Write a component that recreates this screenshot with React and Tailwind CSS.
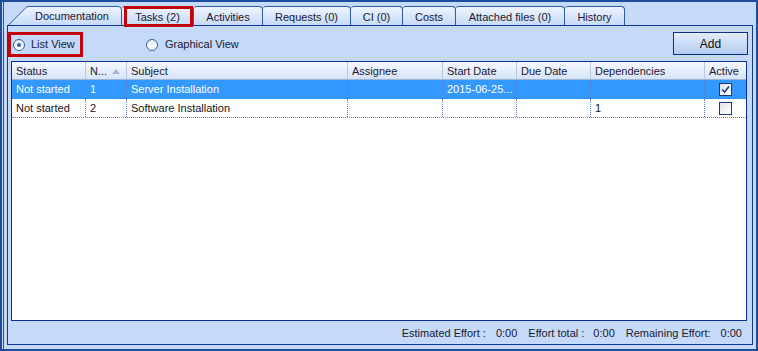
import React from "react";

const tabs = [
  { label: "Tasks (2)", w: "w-[72px]", marked: true },
  { label: "Activities", w: "w-[69px]" },
  { label: "Requests (0)", w: "w-[88px]" },
  { label: "CI (0)", w: "w-[52px]" },
  { label: "Costs", w: "w-[53px]" },
  { label: "Attached files (0)", w: "w-[109px]" },
  { label: "History", w: "w-[60px]" },
];

const columns = [
  { label: "Status" },
  { label: "N...", sort: true },
  { label: "Subject" },
  { label: "Assignee" },
  { label: "Start Date" },
  { label: "Due Date" },
  { label: "Dependencies" },
  { label: "Active" },
];

const rows = [
  { status: "Not started", no: "1", subject: "Server Installation", start: "2015-06-25...", deps: "", active: true, selected: true },
  { status: "Not started", no: "2", subject: "Software Installation", start: "", deps: "1", active: false },
];

const grid = "grid grid-cols-[74px_41px_221px_95px_74px_74px_114px_41px]";

function Radio({ checked }) {
  return (
    <span className="w-[12px] h-[12px] rounded-full border border-[#3d5f95] bg-gradient-to-b from-[#e6ecf4] to-white flex items-center justify-center shrink-0">
      {checked && <span className="w-[4px] h-[4px] rounded-full bg-[#2a64c0]" />}
    </span>
  );
}

function Checkbox({ checked }) {
  return (
    <span className="w-[13px] h-[13px] border border-[#1c3a70] bg-gradient-to-br from-[#dfe3ea] to-white flex items-center justify-center">
      {checked && (
        <svg width="9" height="9" viewBox="0 0 9 9">
          <path d="M1 4.5 L3.5 7 L8 1.5" fill="none" stroke="#1f3f86" strokeWidth="1.6" />
        </svg>
      )}
    </span>
  );
}

export default function App() {
  return (
    <div
      className="w-[758px] h-[351px] border-2 border-[#1f4d9c] bg-[#c4daf8] text-[11px] leading-none text-[#1c1830] overflow-hidden"
      style={{ fontFamily: '"Liberation Sans", Arial, sans-serif' }}
    >
      <div className="h-full ml-[1px] border-l border-[#2a56a6] pl-[3px] pr-[3px] pt-[4px] flex flex-col">
        {/* tab strip */}
        <div className="h-[19px] flex items-end pl-[1px] shrink-0">
          <div className="relative w-[114px] h-[19px] flex items-center justify-center pl-[14px] pt-[2px]">
            <svg className="absolute inset-0" width="114" height="19" viewBox="0 0 114 19">
              <defs>
                <linearGradient id="tabg" x1="0" y1="0" x2="0" y2="1">
                  <stop offset="0" stopColor="#eef4fd" />
                  <stop offset="1" stopColor="#c6dbf7" />
                </linearGradient>
              </defs>
              <path d="M0.5 19 L17 2.5 Q18.5 0.5 21 0.5 L110 0.5 Q113.5 0.5 113.5 4 L113.5 19" fill="url(#tabg)" stroke="#2d5aa5" />
            </svg>
            <span className="relative">Documentation</span>
          </div>
          {tabs.map((t) => (
            <div
              key={t.label}
              className={`relative ${t.w} h-[19px] flex items-center justify-center pt-[2px] border-t border-r border-[#2d5aa5] rounded-tr-[4px] rounded-tl-[3px] bg-gradient-to-b from-[#eef4fd] to-[#c6dbf7]`}
            >
              {t.label}
              {t.marked && (
                <span className="absolute -top-[1px] left-[2px] right-0 -bottom-[2px] border-[3px] border-[#c4000b]" />
              )}
            </div>
          ))}
        </div>

        {/* panel */}
        <div className="h-[320px] border border-[#0d36a0] flex flex-col">
          <div className="h-[23px] mt-[6px] flex items-start pr-[4px] shrink-0">
            <div className="w-[75px] h-[25px] border-[3px] border-[#c4000b] flex items-center pl-[2px] gap-[6px]">
              <Radio checked />
              <span>List View</span>
            </div>
            <div className="ml-[63px] h-[25px] flex items-center gap-[7px]">
              <Radio />
              <span>Graphical View</span>
            </div>
            <button className="ml-auto w-[75px] h-[23px] border border-[#0c2f8c] bg-gradient-to-b from-[#e3edfb] to-[#b3cdf1] text-[12px] text-[#101010]">
              Add
            </button>
          </div>

          <div className="ml-[3px] mt-[6px] w-[736px] h-[260px] border border-[#0a2f92] bg-white shrink-0">
            <div className={`${grid} h-[18px] border-b border-[#9cb3da] bg-gradient-to-b from-[#f7faff] to-[#d5e3f7]`}>
              {columns.map((c, i) => (
                <div
                  key={c.label}
                  className={`relative flex items-center px-[4px] pt-[1px] ${i < columns.length - 1 ? "border-r border-[#b7c8e2]" : ""}`}
                >
                  {c.label}
                  {c.sort && (
                    <svg className="absolute right-[6px] top-[7px]" width="8" height="5" viewBox="0 0 8 5">
                      <path d="M0 5 L4 0 L8 5 Z" fill="#a6b6cf" />
                    </svg>
                  )}
                </div>
              ))}
            </div>
            {rows.map((r) => {
              const cells = [r.status, r.no, r.subject, "", r.start, "", r.deps];
              return (
                <div
                  key={r.no}
                  className={`${grid} h-[19px] border-b border-dotted border-[#5f7fc4] ${r.selected ? "bg-[#3399ff] text-white" : "text-[#141414]"}`}
                >
                  {cells.map((v, i) => (
                    <div key={i} className="flex items-center px-[4px] border-r border-dotted border-[#5f7fc4] whitespace-nowrap overflow-hidden">
                      {v}
                    </div>
                  ))}
                  <div className="flex items-center justify-center">
                    <Checkbox checked={r.active} />
                  </div>
                </div>
              );
            })}
          </div>

          <div className="flex-1 flex items-center justify-end pr-[10px] pt-[1px] text-[#1c1830]">
            <span>Estimated Effort :</span>
            <span className="ml-[10px]">0:00</span>
            <span className="ml-[11px]">Effort total :</span>
            <span className="ml-[9px]">0:00</span>
            <span className="ml-[11px]">Remaining Effort:</span>
            <span className="ml-[10px]">0:00</span>
          </div>
        </div>
      </div>
    </div>
  );
}
